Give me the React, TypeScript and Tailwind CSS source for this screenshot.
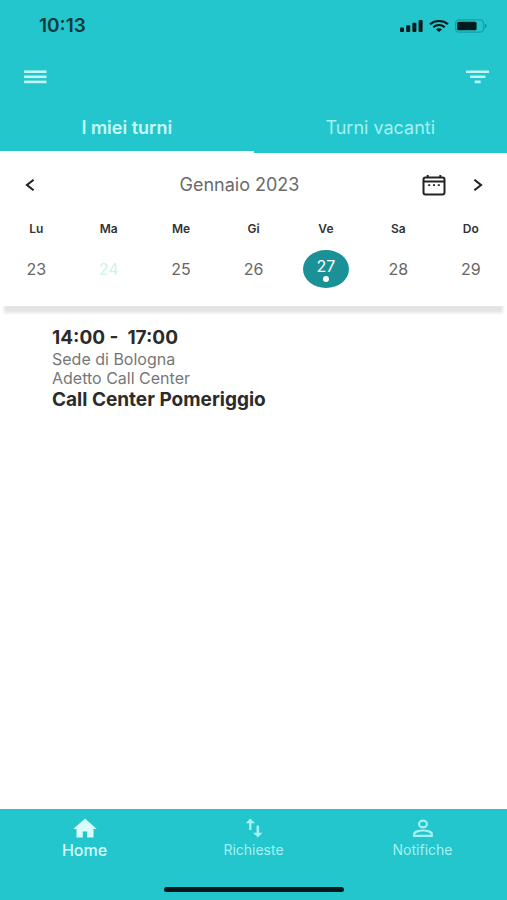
import React from "react";

const days = [
  { name: "Lu", date: 23 },
  { name: "Ma", date: 24 },
  { name: "Me", date: 25 },
  { name: "Gi", date: 26 },
  { name: "Ve", date: 27 },
  { name: "Sa", date: 28 },
  { name: "Do", date: 29 },
];

function dayColor(date: number) {
  return date === 24 ? "text-[#cdf3f0]" : "text-[#666666]";
}

function StatusBar() {
  return (
    <div className="flex h-12 items-center justify-between pt-1 pr-5 pl-[39px]">
      <span className="text-[19px] leading-6 font-semibold text-[#0b3a3d]">10:13</span>
      <div className="flex items-center gap-1.5 text-[#04191b]">
        <svg className="h-3 w-6" viewBox="0 0 24 12" fill="currentColor" aria-label="Segnale">
          <rect x="1" y="7.5" width="4" height="4.5" rx="1" />
          <rect x="7.2" y="5.3" width="4" height="6.7" rx="1" />
          <rect x="13.4" y="2.8" width="4" height="9.2" rx="1" />
          <rect x="19.6" y="0" width="4" height="12" rx="1" />
        </svg>
        <svg className="h-3 w-5" viewBox="0 0 20 12" fill="none" stroke="currentColor" strokeWidth="2.1" aria-label="Wi-Fi">
          <path d="M1 4.200C6 0 14 0 19 4.200" />
          <path d="M4.300 7.200C7.800 4.500 12.200 4.500 15.700 7.200" />
          <path d="M7 9.400c2-1.400 4-1.400 6 0L10 12z" fill="currentColor" stroke="none" />
        </svg>
        <svg className="h-3.5 w-8" viewBox="0 0 32 14" aria-label="Batteria">
          <rect x="0.6" y="0.8" width="28" height="12.4" rx="3.6" fill="none" stroke="#15a0a5" strokeWidth="1.3" />
          <rect x="2.200" y="2.700" width="19.400" height="8.600" rx="1.600" fill="currentColor" />
          <path d="M30 5c2 .6 2 3.400 0 4z" fill="#15898e" />
        </svg>
      </div>
    </div>
  );
}

function Header() {
  return (
    <header className="bg-[#23c6cc]">
      <StatusBar />
      <div className="flex h-14 items-center justify-between px-[18px] pt-0.5 text-[#c0f8f8]">
        <button type="button" aria-label="Menu" className="px-1.5 py-2">
          <svg className="h-3.5 w-[23px]" viewBox="0 0 23 14" fill="currentColor">
            <rect y="0.4" width="22.5" height="2.6" />
            <rect y="5.5" width="22.5" height="2.6" />
            <rect y="10.6" width="22.5" height="2.6" />
          </svg>
        </button>
        <button type="button" aria-label="Filtra" className="py-2">
          <svg className="h-3.5 w-[23px]" viewBox="0 0 23 14" fill="currentColor">
            <rect y="0.4" width="23" height="2.6" rx="0.6" />
            <rect x="4" y="5.5" width="15.5" height="2.6" rx="0.6" />
            <rect x="8.7" y="10.6" width="6" height="2.6" rx="0.6" />
          </svg>
        </button>
      </div>
      <div role="tablist" className="grid grid-cols-2 text-lg leading-6">
        <button type="button" role="tab" aria-selected="true" className="h-[49px] border-b-2 border-white font-semibold text-[#c8fbfa]">
          I miei turni
        </button>
        <button type="button" role="tab" aria-selected="false" className="h-[49px] border-b-2 border-transparent text-[#a6f0f1]">
          Turni vacanti
        </button>
      </div>
    </header>
  );
}

function Calendar() {
  return (
    <section className="bg-white pb-[18px] shadow-[0_11px_3px_-4px_#e4e4e4]">
      <div className="grid h-16 grid-cols-[1fr_auto_1fr] items-center pr-[23px] pl-6 text-[#222222]">
        <button type="button" aria-label="Settimana precedente" className="justify-self-start">
          <svg className="h-3 w-3" viewBox="0 0 12 12" fill="none" stroke="currentColor" strokeWidth="2.1">
            <path d="M9.600 0.800 3 6l6.600 5.200" />
          </svg>
        </button>
        <h1 className="-ml-[29px] text-lg leading-6 text-[#6b6b6b]">Gennaio 2023</h1>
        <div className="flex items-center gap-[26px] justify-self-end">
          <button type="button" aria-label="Apri calendario">
            <svg className="h-[22px] w-6" viewBox="0 0 24 22" fill="none" stroke="currentColor" strokeWidth="2">
              <rect x="1.500" y="3.500" width="21" height="17" rx="2" />
              <path d="M1.500 7.600h21M5.700 1v3M18.300 1v3" />
              <path d="M6.200 11.200h2M11 11.200h2M15.800 11.200h2" strokeWidth="1.8" />
            </svg>
          </button>
          <button type="button" aria-label="Settimana successiva">
            <svg className="h-3 w-3" viewBox="0 0 12 12" fill="none" stroke="currentColor" strokeWidth="2.1">
              <path d="M2.400 0.800 9 6l-6.600 5.200" />
            </svg>
          </button>
        </div>
      </div>
      <div className="grid grid-cols-7 text-center">
        {days.map((day) => (
          <div key={day.name} className="flex flex-col items-center gap-[9px]">
            <span className="text-xs leading-6 font-semibold text-[#333333]">{day.name}</span>
            {day.date === 27 ? (
              <button type="button" aria-pressed="true" className="flex h-[38px] w-[46px] flex-col items-center rounded-[50%] bg-[#1a9196] pt-1.5 text-base leading-5 text-white">
                27
                <span className="size-1.5 rounded-full bg-white" />
              </button>
            ) : (
              <button type="button" className={"h-[38px] w-[46px] text-base leading-5 " + dayColor(day.date)}>
                {day.date}
              </button>
            )}
          </div>
        ))}
      </div>
    </section>
  );
}

function Shift() {
  return (
    <article className="px-[52px] pt-5">
      <h2 className="text-[19px] leading-6 font-bold whitespace-pre text-[#2b2b2b]">14:00 -  17:00</h2>
      <p className="text-base leading-[19px] text-[#777777]">Sede di Bologna</p>
      <p className="text-base leading-[19px] text-[#777777]">Adetto Call Center</p>
      <h3 className="text-[19px] leading-6 font-bold text-[#2b2b2b]">Call Center Pomeriggio</h3>
    </article>
  );
}

function BottomNav() {
  return (
    <footer className="bg-[#23c6cc] pt-2">
      <nav className="grid grid-cols-3 text-[#a6f0f1]">
        <a href="#home" aria-current="page" className="flex flex-col items-center text-base leading-[22px] font-medium text-[#d8fdfc]">
          <svg className="h-[22px] w-6" viewBox="0 0 24 22" fill="currentColor">
            <path d="M12 1.500 0.300 12H3.500V20.500h6.300v-6h4.400v6h6.300V12h3.200z" />
          </svg>
          Home
        </a>
        <a href="#richieste" className="flex flex-col items-center text-sm leading-[22px]">
          <svg className="h-[22px] w-6" viewBox="0 0 24 22" fill="currentColor">
            <path d="M8.300 1.500 3.600 6.300h3.500V13h2.400V6.300H13zM17 15.700V8.500h-2.400v7.200h-3.500l4.700 4.800 4.700-4.800z" />
          </svg>
          Richieste
        </a>
        <a href="#notifiche" className="flex flex-col items-center text-sm leading-[22px]">
          <svg className="h-[22px] w-6" viewBox="0 0 24 22" fill="none" stroke="currentColor" strokeWidth="2.2">
            <ellipse cx="12" cy="7" rx="3.900" ry="3.300" />
            <path d="M3.200 18.800v-1.800c0-2.400 5-3.500 8.800-3.500s8.800 1.100 8.800 3.500v1.800z" />
          </svg>
          Notifiche
        </a>
      </nav>
      <div className="mx-auto mt-[26px] mb-2 h-[5px] w-[180px] rounded-full bg-[#04191b]" />
    </footer>
  );
}

export default function App() {
  return (
    <div className="flex min-h-screen flex-col bg-white font-['Inter','Lato',sans-serif]">
      <Header />
      <Calendar />
      <main className="flex-1">
        <Shift />
      </main>
      <BottomNav />
    </div>
  );
}
